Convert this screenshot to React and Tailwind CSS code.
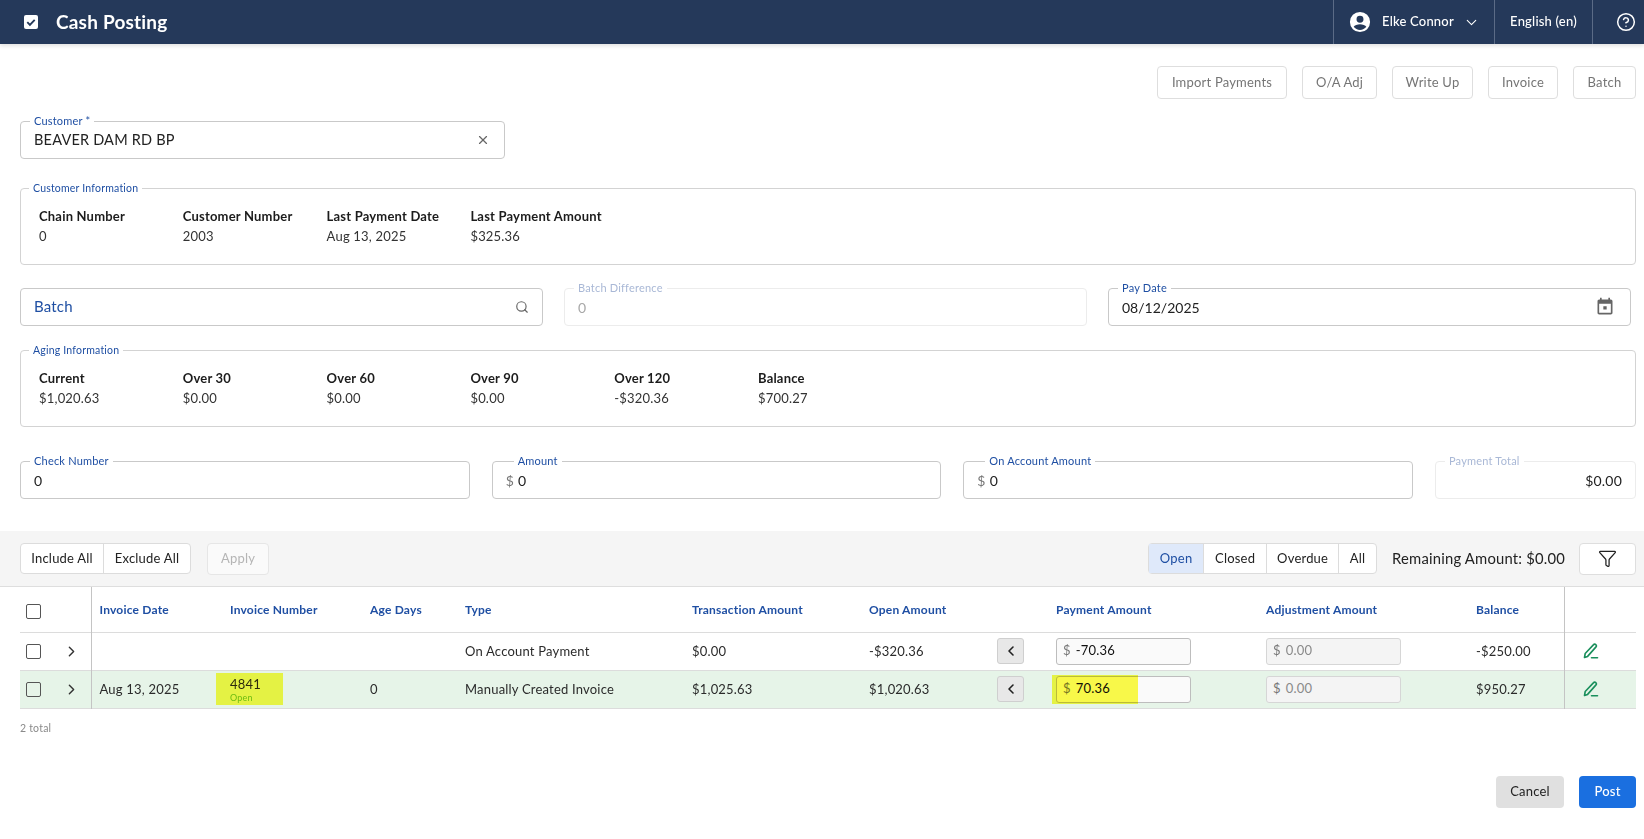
import React from 'react';
import { ChevronDown, ChevronRight, ChevronLeft, CircleHelp, X, Search, Funnel } from 'lucide-react';

const blue = 'text-[#1f4fa3]';

const customerInfo = [
  ['Chain Number', '0'],
  ['Customer Number', '2003'],
  ['Last Payment Date', 'Aug 13, 2025'],
  ['Last Payment Amount', '$325.36'],
];

const agingInfo = [
  ['Current', '$1,020.63'],
  ['Over 30', '$0.00'],
  ['Over 60', '$0.00'],
  ['Over 90', '$0.00'],
  ['Over 120', '-$320.36'],
  ['Balance', '$700.27'],
];

const actions = [
  ['Import Payments', 'w-[130px]'],
  ['O/A Adj', 'w-[75px]'],
  ['Write Up', 'w-[81px]'],
  ['Invoice', 'w-[70px]'],
  ['Batch', 'w-[63px]'],
];

const columns = ['Invoice Date', 'Invoice Number', 'Age Days', 'Type', 'Transaction Amount', 'Open Amount', '', 'Payment Amount', 'Adjustment Amount', 'Balance'];

// outlined field with the label sitting on the border
const Field = ({ label, disabled, labelLeft = 'left-[9px]', children }) => (
  <div className={`relative h-[38px] rounded border flex items-center px-[13px] ${disabled ? 'border-[#ececec]' : 'border-[#c9c9c9]'}`}>
    <span className={`absolute ${labelLeft} -top-[8px] bg-white px-[4px] text-[11px] leading-[14px] ${disabled ? 'text-[#a9b8d6]' : blue}`}>{label}</span>
    {children}
  </div>
);

const InfoBox = ({ label, items }) => (
  <div className="relative h-[77px] rounded border border-[#d3d3d3] pt-[17px] pl-[18px] flex">
    <span className={`absolute left-[8px] -top-[8px] bg-white px-[4px] text-[10.5px] leading-[14px] ${blue}`}>{label}</span>
    {items.map(([name, value]) => (
      <div key={name} className="w-[143.8px] text-[13px] leading-[20px]">
        <div className="font-bold text-[#1c1c1c]">{name}</div>
        <div className="text-[#333]">{value}</div>
      </div>
    ))}
  </div>
);

const Checkbox = () => <span className="block w-[15px] h-[15px] rounded-[2px] border border-[#555] bg-transparent" />;

const MoneyInput = ({ value, disabled, highlight }) => (
  <div className={`relative h-[27px] w-[135px] rounded-[3px] border flex items-center pl-[6px] text-[13px] ${disabled ? 'bg-[#f4f4f4] border-[#d6d6d6] text-[#8a8a8a]' : 'bg-[#fafafa] border-[#bdbdbd] text-[#111]'}`}>
    <span className="text-[#777] mr-[5px]">$</span>{value}
    {highlight && <span className="absolute -left-[5px] -top-[2px] -bottom-[2px] w-[86px] bg-[#fdfd4a] mix-blend-multiply" />}
  </div>
);

const EditIcon = () => (
  <svg width="18" height="18" viewBox="0 0 18 18" fill="none" stroke="#1a8f5c" strokeWidth="1.6" strokeLinejoin="round" strokeLinecap="round">
    <path d="M2.5 15.5l.7-4L11.6 2.6a1.4 1.4 0 012.1 0l.3.3a1.4 1.4 0 010 2L5.6 14.4z" />
    <path d="M9.5 15.8h6" />
  </svg>
);

const Row = ({ green, date, number, days, type, trans, open, payment, balance, highlight }) => (
  <tr className={`h-[38px] border-b border-[#dcdcdc] text-[13px] text-[#2b2b2b] ${green ? 'bg-[#e6f4e8]' : ''}`}>
    <td className="pl-[6px] pt-[1px]"><Checkbox /></td>
    <td className="pl-[5px]"><ChevronRight size={17} strokeWidth={2} className="text-[#333]" /></td>
    <td className="pl-[8px] pt-[2px] border-l border-[#c4c4c4]">{date}</td>
    <td className="pl-[8px] relative">
      {number && (
        <>
          <div className="leading-[15px] pt-[1px]">{number}</div>
          <div className="text-[9px] leading-[11px] text-[#6fbf3a]">Open</div>
          <span className="absolute left-[-6px] top-[2px] bottom-[3px] w-[67px] bg-[#fdfd4a] mix-blend-multiply" />
        </>
      )}
    </td>
    <td className="pl-[8px] pt-[2px]">{days}</td>
    <td className="pl-[8px] pt-[2px]">{type}</td>
    <td className="pl-[8px] pt-[2px]">{trans}</td>
    <td className="pl-[8px] pt-[2px]">{open}</td>
    <td className="pl-[8px]">
      <span className="w-[27px] h-[26px] rounded-[3px] border border-[#cfcfcf] bg-[#e8e8e8] flex items-center justify-center">
        <ChevronLeft size={16} strokeWidth={2.4} className="text-[#222]" />
      </span>
    </td>
    <td className="pl-[8px]"><MoneyInput value={payment} highlight={highlight} /></td>
    <td className="pl-[8px]"><MoneyInput value="0.00" disabled /></td>
    <td className="pl-[8px] pt-[2px]">{balance}</td>
    <td className="pl-[17px] border-l border-[#c4c4c4]"><EditIcon /></td>
  </tr>
);

const App = () => {
  return (
    <div className="min-h-[839px] bg-white font-['Lato','Liberation_Sans',sans-serif] tracking-[0.2px]">

      {/* HEADER */}
      <header className="h-[44px] bg-[#25395a] shadow-[0_2px_4px_rgba(0,0,0,0.12)] flex items-stretch text-white">
        <div className="flex items-center flex-1 pl-[24px]">
          <svg width="14" height="14" viewBox="0 0 14 14">
            <rect width="14" height="14" rx="2" fill="#fff" />
            <path d="M3.3 7.2l2.6 2.6 4.8-5" fill="none" stroke="#25395a" strokeWidth="1.9" />
          </svg>
          <span className="ml-[18px] text-[19px] font-bold">Cash Posting</span>
        </div>
        <div className="w-[161px] border-l border-[#5b6b86] flex items-center pl-[15px]">
          <svg width="22" height="22" viewBox="0 0 24 24" fill="#fff">
            <path d="M12 1a11 11 0 100 22 11 11 0 000-22zm0 4.2a3.8 3.8 0 110 7.6 3.8 3.8 0 010-7.6zm0 15.4a8.6 8.6 0 01-6.9-3.4c.9-1.8 4.2-2.8 6.9-2.8s6 1 6.9 2.8a8.6 8.6 0 01-6.9 3.4z" />
          </svg>
          <span className="ml-[11px] text-[13px] font-medium">Elke Connor</span>
          <ChevronDown size={17} strokeWidth={1.5} className="ml-[9px]" />
        </div>
        <div className="w-[98px] border-l border-[#5b6b86] flex items-center justify-center text-[13px] font-medium">English (en)</div>
        <div className="w-[52px] border-l border-[#5b6b86] flex items-center pl-[23px]"><CircleHelp size={20} strokeWidth={1.8} /></div>
      </header>

      <div className="pl-[20px] pr-[8px]">
        {/* ACTIONS */}
        <div className="mt-[22px] flex justify-end gap-[15px] text-[13px] text-[#757575]">
          {actions.map(([name, width]) => (
            <button key={name} className={`h-[33px] ${width} rounded border border-[#dedede] bg-white`}>{name}</button>
          ))}
        </div>

        {/* CUSTOMER */}
        <div className="mt-[22px] w-[485px]">
          <Field label="Customer *">
            <span className="flex-1 text-[14.5px] text-[#222]">BEAVER DAM RD BP</span>
            <X size={14} className="text-[#666] mr-[1px]" />
          </Field>
        </div>

        <div className="mt-[29px]"><InfoBox label="Customer Information" items={customerInfo} /></div>

        {/* BATCH ROW */}
        <div className="mt-[23px] pr-[5px] grid grid-cols-3 gap-[21px]">
          <div className="h-[38px] rounded border border-[#c9c9c9] flex items-center px-[13px]">
            <span className={`flex-1 text-[15px] leading-[20px] pb-[2px] ${blue}`}>Batch</span>
            <Search size={14} className="text-[#666]" />
          </div>
          <Field label="Batch Difference" disabled>
            <span className="text-[14px] text-[#a8a8a8]">0</span>
          </Field>
          <Field label="Pay Date">
            <span className="flex-1 text-[14px] tracking-normal text-[#222]">08/12/2025</span>
            <svg width="20" height="20" viewBox="0 0 24 24" fill="#666" className="mr-[2px]">
              <path d="M14 11h-4v4h4zM16 1v2H8V1H6v2H5c-1.11 0-1.99.9-1.99 2L3 19c0 1.1.89 2 2 2h14c1.1 0 2-.9 2-2V5c0-1.1-.9-2-2-2h-1V1h-2zm3 18H5V8h14v11z" />
            </svg>
          </Field>
        </div>

        <div className="mt-[24px]"><InfoBox label="Aging Information" items={agingInfo} /></div>

        {/* AMOUNT ROW */}
        <div className="mt-[34px] grid grid-cols-[1fr_1fr_1fr_201px] gap-[22px] text-[14px] text-[#222]">
          <Field label="Check Number">0</Field>
          <Field label="Amount" labelLeft="left-[21px]"><span className="text-[#777] mr-[4px]">$</span>0</Field>
          <Field label="On Account Amount" labelLeft="left-[21px]"><span className="text-[#777] mr-[4px]">$</span>0</Field>
          <Field label="Payment Total" disabled>
            <span className="flex-1 text-right">$0.00</span>
          </Field>
        </div>
      </div>

      {/* TOOLBAR */}
      <div className="mt-[32px] h-[56px] bg-[#f5f5f5] border-b border-[#dedede] pl-[20px] pr-[8px] flex items-center text-[13px]">
        <div className="flex h-[31px] rounded border border-[#dcdcdc] bg-white text-[#222]">
          <span className="w-[83px] flex items-center justify-center border-r border-[#dcdcdc]">Include All</span>
          <span className="w-[86px] flex items-center justify-center">Exclude All</span>
        </div>
        <button className="ml-[16px] h-[32px] w-[62px] rounded border border-[#e6e6e6] bg-[#fafafa] text-[#b5b5b5]">Apply</button>
        <div className="ml-auto flex h-[31px] rounded border border-[#dcdcdc] bg-white text-[#222]">
          <span className={`w-[55px] flex items-center justify-center bg-[#dfe9fa] border-r border-[#dcdcdc] ${blue}`}>Open</span>
          <span className="w-[63px] flex items-center justify-center border-r border-[#dcdcdc]">Closed</span>
          <span className="w-[72px] flex items-center justify-center border-r border-[#dcdcdc]">Overdue</span>
          <span className="w-[37px] flex items-center justify-center">All</span>
        </div>
        <span className="ml-[15px] text-[14.8px] text-[#222]">Remaining Amount: $0.00</span>
        <button className="ml-[14px] w-[57px] h-[32px] rounded border border-[#dedede] bg-white flex items-center justify-center">
          <Funnel size={19} strokeWidth={1.6} className="text-[#222]" />
        </button>
      </div>

      {/* TABLE */}
      <div className="pl-[20px] pr-[8px]">
        <table className="w-[1616px] table-fixed border-collapse">
          <colgroup>
            {[38, 33, 131, 140, 95, 227, 177, 128, 59, 210, 210, 96, 72].map((w, i) => <col key={i} style={{ width: w }} />)}
          </colgroup>
          <thead>
            <tr className="h-[45px] border-b border-[#dcdcdc]">
              <th className="pl-[6px] pt-[5px]"><Checkbox /></th>
              <th />
              {columns.map((name, i) => (
                <th key={i} className={`pl-[8px] pt-[2px] text-left text-[12px] font-bold ${blue} ${i === 0 ? 'border-l border-[#c4c4c4]' : ''}`}>{name}</th>
              ))}
              <th className="border-l border-[#c4c4c4]" />
            </tr>
          </thead>
          <tbody>
            <Row type="On Account Payment" trans="$0.00" open="-$320.36" payment="-70.36" balance="-$250.00" />
            <Row green date="Aug 13, 2025" number="4841" days="0" type="Manually Created Invoice" trans="$1,025.63" open="$1,020.63" payment="70.36" balance="$950.27" highlight />
          </tbody>
        </table>

        <div className="mt-[12px] text-[10.5px] leading-[14px] text-[#8a8a8a]">2 total</div>

        {/* FOOTER */}
        <div className="mt-[41px] flex justify-end gap-[15px] text-[13px]">
          <button className="w-[68px] h-[32px] rounded bg-[#e0e0e0] text-[#222]">Cancel</button>
          <button className="w-[57px] h-[32px] rounded bg-[#1a6fe0] text-white font-medium">Post</button>
        </div>
      </div>
    </div>
  );
};

export default App;
